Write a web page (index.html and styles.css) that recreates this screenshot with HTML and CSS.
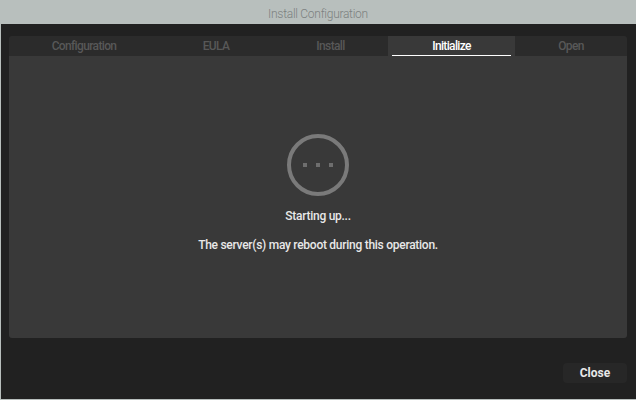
FILE: index.html
```html
<!DOCTYPE html>
<html lang="en">
<head>
    <meta charset="UTF-8">
    <meta name="viewport" content="width=device-width, initial-scale=1.0">
    <title>Install Configuration</title>

    <link rel="stylesheet" href="styles.css">
</head>
<body>
    <div class="window">
        <div class="titlebar">Install Configuration</div>

        <div class="content">
            <div class="tabs">
                <div class="tab">Configuration</div>
                <div class="tab">EULA</div>
                <div class="tab">Install</div>
                <div class="tab active">Initialize</div>
                <div class="tab">Open</div>
            </div>

            <div class="panel">
                <div class="spinner">
                    <span class="dot"></span>
                    <span class="dot"></span>
                    <span class="dot"></span>
                </div>
                <p class="status">Starting up...</p>
                <p class="note">The server(s) may reboot during this operation.</p>
            </div>

            <div class="footer">
                <button class="close">Close</button>
            </div>
        </div>
    </div>
</body>
</html>
```

FILE: styles.css
```css
:root {
    --chrome-color: #b8bfbd;
    --window-color: #212121;
    --tabs-color: #2b2b2b;
    --panel-color: #393939;
    --muted-color: #585858;
    --text-color: #e8e8e8;
}

html, body {
    margin: 0;
    height: 100%;
    overflow: hidden;
}

body {
    font-family: Roboto, "Liberation Sans", sans-serif;
    background-color: var(--chrome-color);
}

.window {
    height: 399px;
    width: 635px;
    margin-left: 1px;
    display: flex;
    flex-direction: column;
}

.titlebar {
    height: 24px;
    line-height: 28px;
    margin-left: -1px;
    text-align: center;
    font-size: 12px;
    font-weight: 300;
    letter-spacing: -0.28px;
    color: #7c8180;
}

.content {
    flex: 1;
    background-color: var(--window-color);
    padding: 12px 9px 0 8px;
    display: flex;
    flex-direction: column;
}

.tabs {
    height: 20px;
    display: grid;
    grid-template-columns: 150px 114px 115px 127px 112px;
    background-color: var(--tabs-color);
    border-radius: 3px 3px 0 0;
}

.tab {
    position: relative;
    line-height: 20px;
    text-align: center;
    font-size: 12px;
    font-weight: 500;
    letter-spacing: -0.65px;
    color: var(--muted-color);
}

.tab.active {
    background-color: var(--panel-color);
    color: #fff;
}

/* Linea sotto la scheda attiva */
.tab.active::after {
    content: "";
    position: absolute;
    left: 4px;
    right: 4px;
    bottom: 0;
    height: 1px;
    background-color: #fff;
}

.panel {
    height: 282px;
    background-color: var(--panel-color);
    border-radius: 0 0 3px 3px;
    display: flex;
    flex-direction: column;
    align-items: center;
    color: var(--text-color);
    font-size: 12px;
    font-weight: 500;
    letter-spacing: -0.27px;
}

.spinner {
    box-sizing: border-box;
    width: 62px;
    height: 62px;
    margin-top: 78px;
    border: 4.5px solid #7a7a7a;
    border-radius: 50%;
    display: flex;
    justify-content: center;
    align-items: center;
    gap: 9px;
}

.dot {
    width: 4px;
    height: 4px;
    background-color: #6e6e6e;
}

.status {
    margin: 13px 0 0;
    line-height: 14px;
}

.note {
    margin: 15px 0 0;
    line-height: 14px;
}

.footer {
    flex: 1;
    display: flex;
    justify-content: flex-end;
    align-items: flex-start;
    padding-top: 25px;
}

.close {
    width: 64px;
    height: 20px;
    padding: 0;
    border: none;
    border-radius: 4px;
    background-color: #272727;
    color: var(--text-color);
    font-family: inherit;
    font-size: 12px;
    font-weight: 700;
    cursor: pointer;
}
```
